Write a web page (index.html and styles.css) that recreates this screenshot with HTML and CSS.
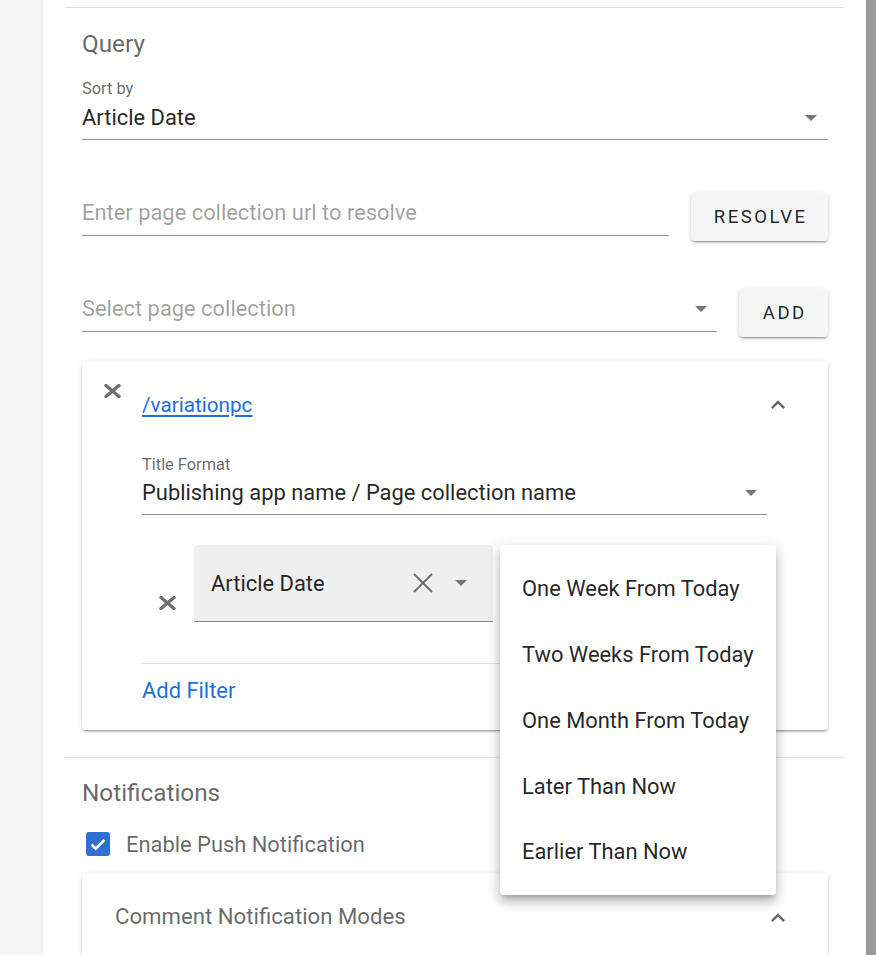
FILE: index.html
```html
<!DOCTYPE html>
<html lang="en">
<head>
<meta charset="utf-8">
<title>Query settings</title>
<link rel="stylesheet" href="styles.css">
</head>
<body>
<div class="page">
  <div class="gutter"></div>
  <main class="panel">
    <hr class="divider divider-top">
    <section class="section">
      <h2 class="section-title">Query</h2>
      <div class="field field-sort">
        <div class="field-label">Sort by</div>
        <div class="field-input">
          <span class="value">Article Date</span>
          <svg class="drop" width="12" height="6" viewBox="0 0 12 6"><path d="M0 0h12L6 6z"/></svg>
        </div>
      </div>
      <div class="row row-resolve">
        <div class="field-input grow"><span class="placeholder">Enter page collection url to resolve</span></div>
        <button class="btn btn-resolve">RESOLVE</button>
      </div>
      <div class="row row-add">
        <div class="field-input grow">
          <span class="placeholder">Select page collection</span>
          <svg class="drop" width="12" height="6" viewBox="0 0 12 6"><path d="M0 0h12L6 6z"/></svg>
        </div>
        <button class="btn btn-add">ADD</button>
      </div>
      <div class="card pc-card">
        <div class="card-close">
          <svg class="xbold" width="17" height="14" viewBox="0 0 17 14"><path d="M2 1.5L15 12.5M15 1.5L2 12.5"/></svg>
        </div>
        <div class="card-body">
          <div class="card-head">
            <a class="link" href="#">/variationpc</a>
            <svg class="chev" width="28" height="28" viewBox="0 0 24 24"><path d="M12 8l-6 6 1.41 1.41L12 10.83l4.59 4.58L18 14z"/></svg>
          </div>
          <div class="field field-title">
            <div class="field-label">Title Format</div>
            <div class="field-input">
              <span class="value">Publishing app name / Page collection name</span>
              <svg class="drop" width="12" height="6" viewBox="0 0 12 6"><path d="M0 0h12L6 6z"/></svg>
            </div>
          </div>
          <div class="filter-row">
            <div class="filter-remove">
              <svg class="xbold" width="17" height="14" viewBox="0 0 17 14"><path d="M2 1.5L15 12.5M15 1.5L2 12.5"/></svg>
            </div>
            <div class="filled-select">
              <span class="value">Article Date</span>
              <svg class="xthin" width="20" height="20" viewBox="0 0 20 20"><path d="M1 1L19 19M19 1L1 19"/></svg>
              <svg class="drop drop-lg" width="12" height="6" viewBox="0 0 12 6"><path d="M0 0h12L6 6z"/></svg>
            </div>
            <div class="filter-value"></div>
          </div>
          <hr class="inner-divider">
          <a class="add-filter" href="#">Add Filter</a>
        </div>
      </div>
    </section>
    <hr class="divider divider-mid">
    <section class="section">
      <h2 class="section-title title-notif">Notifications</h2>
      <label class="checkbox-row">
        <span class="checkbox">
          <svg width="24" height="24" viewBox="0 0 24 24"><path d="M5.5 12.5l4.3 4.2 8.7-8.9" fill="none" stroke="#fff" stroke-width="2.6"/></svg>
        </span>
        <span class="checkbox-label">Enable Push Notification</span>
      </label>
      <div class="card notif-card">
        <span class="notif-title">Comment Notification Modes</span>
        <svg class="chev" width="28" height="28" viewBox="0 0 24 24"><path d="M12 8l-6 6 1.41 1.41L12 10.83l4.59 4.58L18 14z"/></svg>
      </div>
    </section>
  </main>
  <div class="scrollbar"></div>
</div>
<div class="menu">
  <div class="menu-item">One Week From Today</div>
  <div class="menu-item">Two Weeks From Today</div>
  <div class="menu-item">One Month From Today</div>
  <div class="menu-item">Later Than Now</div>
  <div class="menu-item">Earlier Than Now</div>
</div>
</body>
</html>
```
FILE: styles.css
```css
* { box-sizing: border-box; }
html, body { margin: 0; padding: 0; height: 955px; overflow: hidden; }
body {
  background: #f5f5f5;
  font-family: Roboto, "Noto Sans", "Liberation Sans", sans-serif;
  color: rgba(0,0,0,.87);
  position: relative;
}
.page { display: flex; height: 955px; }
.gutter { width: 43px; flex: none; background: #f5f5f5; }
.panel {
  width: 823px; flex: none; background: #fff;
  padding-top: 7px;
  box-shadow: -1px 0 2px rgba(0,0,0,.05);
}
.scrollbar { flex: 1; background: #9b9b9b; }

.divider { border: 0; height: 1px; background: #e0e0e0; margin: 0 22px; }
.divider-mid { margin-top: 27px; }
.section { padding: 0 38px 0 39px; }
.section-title {
  margin: 22px 0 0; font-size: 24.3px; line-height: 28px; font-weight: 400;
  color: rgba(0,0,0,.6);
}
.title-notif { margin-top: 21px; }

.field-label { font-size: 16.4px; line-height: 18px; color: rgba(0,0,0,.6); }
.field-sort { margin-top: 22px; }
.field-input {
  display: flex; align-items: center; height: 36px;
  padding-bottom: 7px; border-bottom: 1px solid #8f8f8f;
  margin-top: 6px; font-size: 21.9px; line-height: 28px;
}
.field-input .value, .field-input .placeholder { flex: 1; white-space: nowrap; }
.placeholder { color: rgba(0,0,0,.38); }
.drop { fill: #757575; flex: none; margin-right: 11px; }
.row { display: flex; align-items: center; gap: 22px; height: 48px; }
.row .field-input { margin-top: 0; height: 37px; padding-bottom: 8px; }
.grow { flex: 1; }
.row-resolve { margin-top: 53px; }
.row-add { margin-top: 48px; }
.row-add .drop { margin-right: 10px; }
.btn {
  height: 48px; border: 0; border-radius: 4px; background: #f5f5f5;
  font-family: inherit; font-size: 18.5px; font-weight: 400; letter-spacing: .135em;
  color: rgba(0,0,0,.87); padding: 0 0 0 .135em;
  box-shadow: 0 3px 1px -2px rgba(0,0,0,.2), 0 2px 2px 0 rgba(0,0,0,.14), 0 1px 5px 0 rgba(0,0,0,.12);
}
.btn-resolve { width: 137px; }
.btn-add { width: 89px; }

.card {
  background: #fff; border-radius: 4px;
  box-shadow: 0 3px 1px -2px rgba(0,0,0,.2), 0 2px 2px 0 rgba(0,0,0,.14), 0 1px 5px 0 rgba(0,0,0,.12);
}
.pc-card { margin-top: 24px; display: flex; padding-bottom: 25px; }
.card-close { width: 60px; flex: none; padding: 23px 0 0 22px; }
.xbold { fill: none; stroke: #6f6f6f; stroke-width: 3.4; stroke-linecap: round; display: block; }
.card-body { flex: 1; padding-top: 30px; padding-right: 61px; }
.card-head { display: flex; align-items: center; height: 28px; margin-right: -25px; }
.link { flex: 1; font-size: 20.7px; line-height: 28px; color: #1f6fd6; text-decoration: underline; text-underline-offset: 3px; }
.chev { fill: #666; flex: none; display: block; }
.field-title { margin-top: 37px; }
.field-title .field-input { margin-top: 5px; }
.field-title .drop { margin-right: 10px; }

.filter-row { display: flex; margin-top: 30px; height: 77px; }
.filter-remove { width: 52px; flex: none; padding: 51px 0 0 17px; }
.filled-select {
  width: 299px; flex: none; height: 77px; display: flex; align-items: center;
  background: #efefef; border-radius: 4px 4px 0 0; border-bottom: 1px solid #8a8a8a;
  padding: 0 0 0 17px; font-size: 21.9px;
}
.filled-select .value { flex: 1; }
.xthin { fill: none; stroke: #6f6f6f; stroke-width: 2; flex: none; margin-right: 22px; }
.drop-lg { margin-right: 26px; }
.filter-value { flex: 1; margin-left: 6px; }

.inner-divider { border: 0; height: 1px; background: #e0e0e0; margin: 41px 0 0; }
.add-filter {
  display: block; margin-top: 13px; font-size: 21.9px; line-height: 28px;
  color: #1f6fd6; text-decoration: none;
}

.checkbox-row { display: flex; align-items: center; height: 28px; margin-top: 23px; padding-left: 4px; }
.checkbox {
  width: 24px; height: 24px; border-radius: 3px; background: #2f70d1; flex: none;
}
.checkbox svg { display: block; }
.checkbox-label { margin-left: 16px; font-size: 21.9px; color: rgba(0,0,0,.6); }

.notif-card {
  margin-top: 15px; height: 120px; display: flex; align-items: flex-start;
  padding: 29px 36px 0 33px;
}
.notif-title { flex: 1; font-size: 22.2px; line-height: 28px; color: rgba(0,0,0,.6); }
.notif-card .chev { margin-top: 2px; }

.menu {
  position: absolute; left: 500px; top: 545px; width: 276px; height: 350px;
  background: #fff; border-radius: 4px; padding: 11px 0 0;
  box-shadow: 0 5px 5px -3px rgba(0,0,0,.2), 0 8px 10px 1px rgba(0,0,0,.14), 0 3px 14px 2px rgba(0,0,0,.12);
}
.menu-item {
  height: 65.75px; display: flex; align-items: center; padding-left: 22px;
  font-size: 21.9px; color: rgba(0,0,0,.87); white-space: nowrap;
}
```
